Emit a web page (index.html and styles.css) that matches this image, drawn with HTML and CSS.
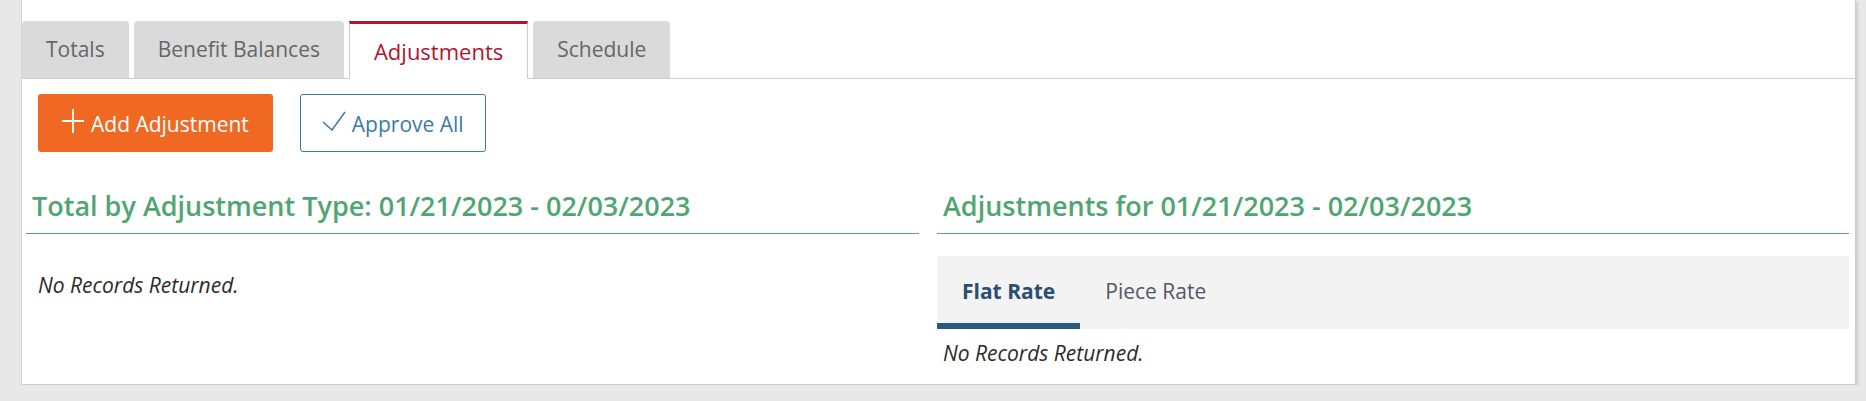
FILE: index.html
```html
<!DOCTYPE html>
<html>
  <head>
    <title>Adjustments</title>
    <link rel="stylesheet" href="styles.css">
  </head>
  <body>
    <div class="card">
      <ul class="tabs">
        <li class="tab">Totals</li>
        <li class="tab">Benefit Balances</li>
        <li class="tab active">Adjustments</li>
        <li class="tab">Schedule</li>
      </ul>
      <div class="tab-content">
        <div class="toolbar">
          <button class="btn btn-orange">
            <!-- plus -->
            <svg class="icon-plus" viewBox="0 0 22 24" fill="none" stroke="#fff" stroke-width="1.8">
              <path d="M11 0v24M0 12h22" />
            </svg>
            <span>Add Adjustment</span>
          </button>
          <button class="btn btn-outline">
            <!-- check -->
            <svg class="icon-check" viewBox="0 0 24 20" fill="none" stroke="#3b7aa6" stroke-width="1.5">
              <path d="M1 11l9 8L23 1" />
            </svg>
            <span>Approve All</span>
          </button>
        </div>
        <div class="columns">
          <section>
            <h3 class="section-title">Total by Adjustment Type: 01/21/2023 - 02/03/2023</h3>
            <p class="empty empty-left">No Records Returned.</p>
          </section>
          <section>
            <h3 class="section-title">Adjustments for 01/21/2023 - 02/03/2023</h3>
            <ul class="subtabs">
              <li class="subtab active">Flat Rate</li>
              <li class="subtab">Piece Rate</li>
            </ul>
            <p class="empty">No Records Returned.</p>
          </section>
        </div>
      </div>
    </div>
  </body>
</html>
```

FILE: styles.css
```css
:root {
  --bg: #e8e8e8;
  --border: #cdcdcd;
  --tab: #dadada;
  --red: #b3132d;
  --orange: #f06923;
  --blue: #3b7aa6;
  --green: #50a672;
  --navy: #2a5a7e;
  --text: #2b2b2b;
}

html,
body {
  margin: 0;
  padding: 0;
  background: var(--bg);
  font-family: "Open Sans", Arial, sans-serif;
  color: var(--text);
}

.card {
  margin: 0 10px 0 21px;
  padding-top: 21px;
  background: #fff;
  border-left: 1px solid #d3d3d3;
  border-right: 1px solid var(--border);
  border-bottom: 1px solid var(--border);
  box-shadow: 2px 2px 2px rgba(0, 0, 0, 0.1);
}

/* top tabs */
.tabs {
  display: flex;
  align-items: flex-start;
  gap: 5px;
  list-style: none;
  margin: 0;
  padding: 0;
  border-bottom: 1px solid var(--border);
}
.tab {
  box-sizing: border-box;
  height: 57px;
  line-height: 57px;
  padding: 0 24px;
  font-size: 21px;
  color: #666;
  background: var(--tab);
  border-radius: 4px 4px 0 0;
}
.tab.active {
  height: 58px;
  line-height: 55px;
  margin-bottom: -1px;
  font-size: 22px;
  color: var(--red);
  background: #fff;
  border: 1px solid var(--border);
  border-top: 3px solid var(--red);
  border-bottom: 0;
  border-radius: 0;
}

.tab-content {
  padding: 15px 6px 17px 4px;
}

/* buttons */
.toolbar {
  display: flex;
  gap: 27px;
  margin-left: 12px;
}
.btn {
  box-sizing: border-box;
  display: inline-flex;
  align-items: center;
  height: 58px;
  padding: 2px 24px 0;
  font-family: inherit;
  font-size: 21px;
  border-radius: 3px;
  cursor: pointer;
}
.btn-orange {
  gap: 7px;
  background: var(--orange);
  color: #fff;
  border: none;
}
.btn-outline {
  gap: 6px;
  padding-left: 21px;
  padding-right: 21px;
  background: #fff;
  color: var(--blue);
  border: 1px solid var(--blue);
}
.icon-plus {
  width: 22px;
  height: 24px;
  margin-bottom: 6px;
}
.icon-check {
  width: 24px;
  height: 20px;
  margin-bottom: 6px;
}

/* two columns */
.columns {
  display: grid;
  grid-template-columns: 893px 1fr;
  gap: 18px;
  margin-top: 36px;
}

.section-title {
  margin: 0;
  padding: 0 6px 9px;
  font-size: 27px;
  font-weight: 600;
  line-height: 36px;
  color: var(--green);
  border-bottom: 1px solid var(--green);
}

.empty {
  margin: 10px 0 0;
  padding-left: 6px;
  font-size: 21px;
  font-style: italic;
  line-height: 28px;
  color: var(--text);
}
.empty-left {
  margin-top: 37px;
  padding-left: 12px;
}

/* inner tabs */
.subtabs {
  display: flex;
  list-style: none;
  margin: 22px 0 0;
  padding: 0;
  background: #f3f3f3;
}
.subtab {
  padding: 4px 25px 0;
  line-height: 63px;
  font-size: 21px;
  color: #4f5a66;
  border-bottom: 6px solid transparent;
}
.subtab.active {
  font-weight: 700;
  color: #2b4f70;
  border-bottom-color: var(--navy);
}
```
